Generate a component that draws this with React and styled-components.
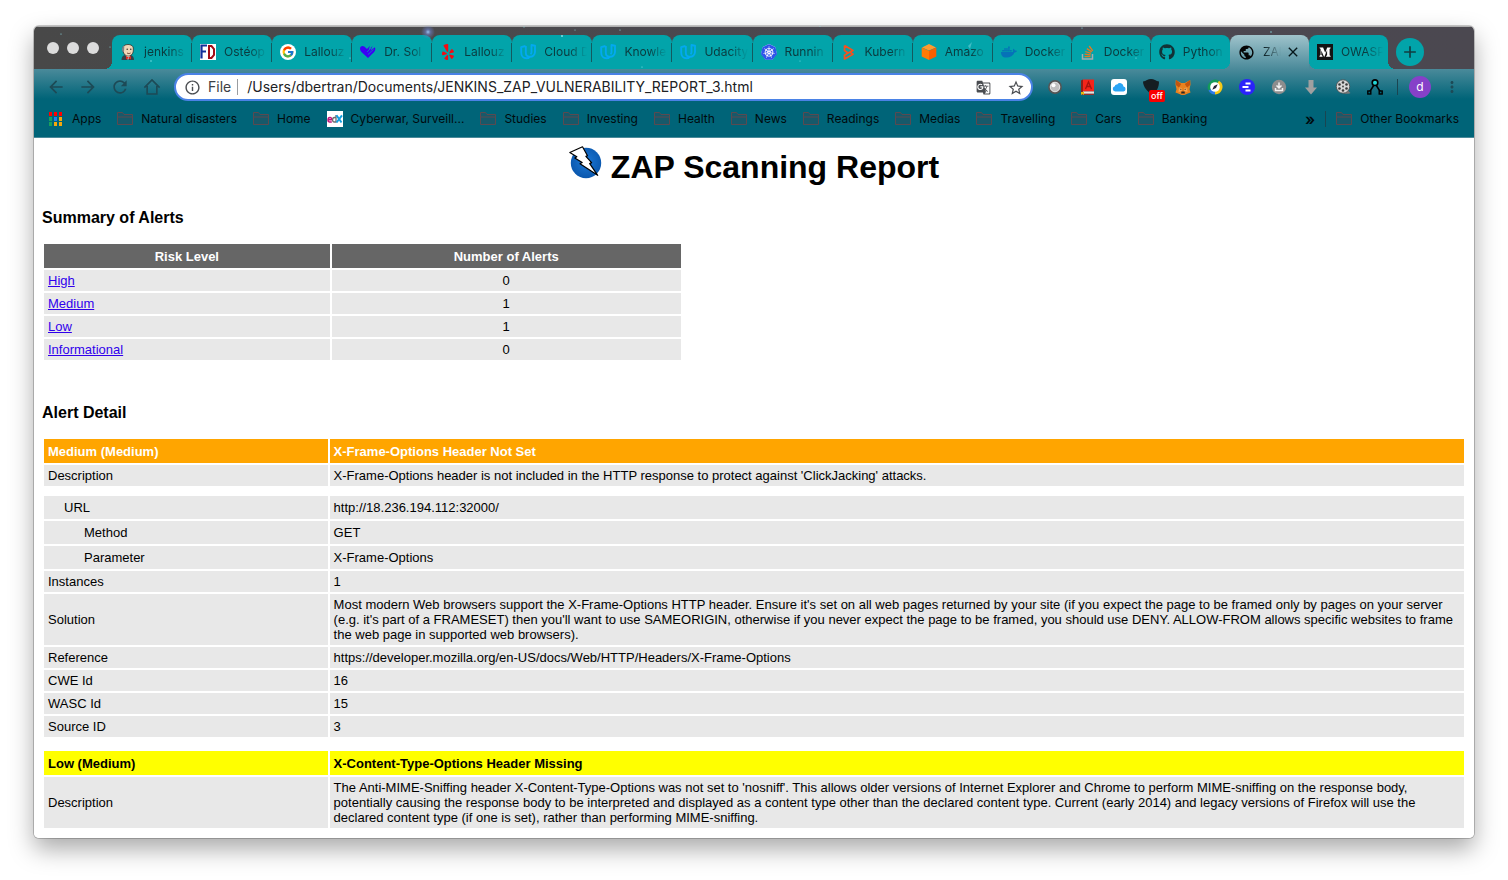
import React from "react";
import styled, { createGlobalStyle, css } from "styled-components";
import { FaYelp, FaDocker, FaGithub } from "react-icons/fa";
import { SiKubernetes } from "react-icons/si";
import { FcGoogle } from "react-icons/fc";
import {
  MdArrowBack,
  MdArrowForward,
  MdRefresh,
  MdInfoOutline,
  MdGTranslate,
  MdStarBorder,
  MdPublic,
  MdClose,
  MdAdd,
  MdMoreVert,
} from "react-icons/md";

const UI_FONT = 'Inter, Roboto, "Liberation Sans", sans-serif';
const PAGE_FONT = '"Liberation Sans", Arial, sans-serif';
const TEAL = "#02a4aa";
const STEEL = "#4a8a9a";
const DEEP = "#006478";

const GlobalStyle = createGlobalStyle`
  * { box-sizing: border-box; }
  body { margin: 0; background: #fff; }
  button { border: 0; padding: 0; background: none; color: inherit; font: inherit; cursor: pointer; }
`;

const Desktop = styled.div`
  padding: 26px 34px 42px;
  overflow: hidden;
`;

const Window = styled.div`
  position: relative;
  overflow: hidden;
  border-radius: 5px;
  background: #fff;
`;

const Shadow = styled.div`
  border-radius: 5px;
  box-shadow: 0 0 0 1px rgba(0, 0, 0, 0.2), 0 11px 24px rgba(0, 0, 0, 0.34);
`;

/* ---------- tab strip ---------- */

const TitleBar = styled.header`
  display: flex;
  align-items: flex-end;
  height: 43px;
  padding: 0 50px 0 13px;
  background: linear-gradient(#b0b0b0 1px, transparent 1px), linear-gradient(90deg, #484848 0%, #4a494c 30%, #4b4751 60%, #4b4850 100%);
`;

const Lights = styled.div`
  display: flex;
  align-self: flex-start;
  align-items: center;
  gap: 8px;
  width: 65px;
  height: 44px;
`;

const Light = styled.button`
  width: 12px;
  height: 12px;
  border-radius: 50%;
  background: #dcdcdc;
`;

const TabStrip = styled.nav`
  display: flex;
  flex: 1;
  min-width: 0;
  height: 34px;
`;

const flare = (side, color) => css`
  content: "";
  position: absolute;
  z-index: 1;
  bottom: 0;
  ${side}: -8px;
  width: 8px;
  height: 8px;
  background: radial-gradient(circle at ${side === "left" ? "0 0" : "8px 0"}, transparent 8px, ${color} 8px);
`;

const Tab = styled.div`
  position: relative;
  display: flex;
  flex: 1 1 79px;
  align-items: center;
  gap: 4px;
  min-width: 0;
  padding: 0 5px 0 8px;
  border-radius: 8px 8px 0 0;
  background: ${(p) => (p.$active ? `linear-gradient(#9fc3cb, ${STEEL})` : TEAL)};
  color: ${(p) => (p.$active ? "#06181c" : "#0b3a3e")};

  &:nth-child(-n + 11) { flex-basis: 80px; }

  ${(p) => (p.$active || p.$first) && css`
    &::before { ${flare("left", p.$active ? STEEL : TEAL)} }
  `}
  ${(p) => (p.$active || p.$last) && css`
    &::after { ${flare("right", p.$active ? STEEL : TEAL)} }
  `}
  ${(p) => p.$divider && css`
    &::after {
      content: "";
      position: absolute;
      right: 0;
      top: 8px;
      width: 1px;
      height: 19px;
      background: #145a5e;
    }
  `}
`;

const TabButton = styled.button`
  display: flex;
  flex: 1;
  align-items: center;
  gap: 8px;
  min-width: 0;
  height: 100%;
  text-align: left;
  svg { flex: none; }
`;

const TabTitle = styled.span`
  flex: 1;
  min-width: 0;
  font: 400 12px/16px ${UI_FONT};
  white-space: nowrap;
  mask-image: linear-gradient(90deg, #000 calc(100% - 18px), transparent);
`;

const CloseTab = styled.button`
  display: grid;
  place-items: center;
  width: 16px;
  height: 16px;
  margin-right: 3px;
`;

const NewTab = styled.button`
  display: grid;
  place-items: center;
  width: 28px;
  height: 28px;
  margin: 0 0 3px 8px;
  border-radius: 50%;
  background: ${TEAL};
  color: #123c40;
`;

const Stars = styled.svg`
  position: absolute;
  z-index: 2;
  inset: 0 auto auto 0;
  pointer-events: none;
`;

/* ---------- toolbar ---------- */

const Toolbar = styled.div`
  display: flex;
  align-items: center;
  height: 36px;
  padding: 0 6px;
  background: linear-gradient(${STEEL}, ${DEEP} 30px);
`;

const ToolButton = styled.button`
  position: relative;
  display: grid;
  flex: none;
  place-items: center;
  width: 32px;
  height: 32px;
  color: #1d4a56;
`;

const Omnibox = styled.form`
  display: flex;
  flex: 1;
  align-items: center;
  min-width: 0;
  height: 28px;
  margin: 0 6px;
  padding: 0 8px;
  border: 2px solid #4a82e6;
  border-radius: 14px;
  background: #fff;
  color: #4a4d51;
`;

const Scheme = styled.label`
  padding: 0 6px 0 7px;
  border-right: 1px solid #9a9da1;
  color: #3c4043;
  font: 400 14px/16px ${UI_FONT};
`;

const Address = styled.input`
  flex: 1;
  min-width: 0;
  padding: 0 0 0 9px;
  border: 0;
  outline: 0;
  background: none;
  color: #202124;
  font: 400 14px/20px ${UI_FONT};
`;

const OmniButton = styled.button`
  display: grid;
  place-items: center;
  width: 16px;
  height: 16px;
  margin-left: 16px;
`;

const OffBadge = styled.span`
  position: absolute;
  right: 2px;
  bottom: 1px;
  padding: 0 2px;
  border-radius: 2px;
  background: #f90000;
  color: #fff;
  font: 500 9px/12px ${UI_FONT};
`;

const Rule = styled.span`
  flex: none;
  width: 1px;
  height: 16px;
  background: #1a4551;
`;

const Account = styled.div`
  display: flex;
  align-items: center;
  gap: 11px;
  padding: 0 5px 0 6px;
`;

const Avatar = styled.button`
  flex: none;
  width: 22px;
  height: 22px;
  border-radius: 50%;
  background: #8640c8;
  color: #fff;
  font: 400 12px/22px ${UI_FONT};
`;

/* ---------- bookmarks ---------- */

const BookmarkBar = styled.nav`
  display: flex;
  align-items: center;
  gap: 16px;
  height: 33px;
  padding: 0 15px 5px 14px;
  border-bottom: 1px solid ${STEEL};
  background: ${DEEP};
`;

const Bookmark = styled.button`
  display: flex;
  align-items: center;
  gap: 8px;
  color: #000b0e;
  font: 400 12px/16px ${UI_FONT};
  white-space: nowrap;
`;

const MoreBookmarks = styled(Bookmark)`
  font-size: 16px;
  font-weight: 600;
`;

const Spacer = styled.span`
  flex: 1;
`;

const BarEnd = styled.div`
  display: flex;
  align-items: center;
  gap: 10px;
`;

/* ---------- report ---------- */

const Report = styled.main`
  padding: 8px;
  color: #000;
  font: 400 13px/15px ${PAGE_FONT};
`;

const ReportTitle = styled.h1`
  display: flex;
  justify-content: center;
  gap: 8px;
  margin: 0;
  font: 700 32px/42px ${PAGE_FONT};
`;

const SectionTitle = styled.h3`
  margin: ${(p) => p.$space}px 0 15px;
  font: 700 16px/18px ${PAGE_FONT};
`;

const Table = styled.table`
  width: ${(p) => p.$width};
  border-spacing: 2px;
  table-layout: fixed;
  & + & { margin-top: 10px; }
`;

const Col = styled.col`
  width: ${(p) => p.$width};
`;

const HeadCell = styled.th`
  height: 24px;
  padding: 0 4px;
  background: ${(p) => p.$fill};
  color: ${(p) => p.$ink};
  text-align: ${(p) => p.$align};
`;

const indents = [4, 20, 40];

const Cell = styled.td`
  height: ${(p) => (p.$tall ? 23 : 21)}px;
  padding: 3px 4px 3px ${(p) => indents[p.$level || 0]}px;
  background: #e8e8e8;
  text-align: ${(p) => p.$align || "left"};
`;

const GapCell = styled.td`
  height: 6px;
  padding: 0;
`;

const RiskLink = styled.a`
  color: #3000ec;
`;

/* ---------- drawings ---------- */

const Svg = ({ s = 16, children }) => (
  <svg width={s} height={s} viewBox="0 0 16 16" fill="none" aria-hidden="true">{children}</svg>
);

const Jenkins = () => (
  <Svg>
    <path d="M1.500 16c0-3 1.500-4.500 3.500-5h5.500c2 .5 3.500 2 3.500 5z" fill="#33414a" />
    <path d="M5.500 11l2.500 5 2.500-5z" fill="#fff" />
    <path d="M2.700 5C2.500 2 5 .5 8 .5s5.600 1.500 5.300 4.600c.3 3-.9 6.600-4.800 7C5 12.300 2.900 9 2.700 5z" fill="#f0d6b7" stroke="#2a1d18" strokeWidth=".7" />
    <path d="M2.700 8C1.500 5.500 1.800 2.500 4.500 1.200 4 3 4.500 5.500 3.800 8z" fill="#7c8488" />
    <circle cx="7.200" cy="5.300" r=".7" fill="#222" /><circle cx="10.800" cy="5.300" r=".7" fill="#222" />
    <path d="M7 9c1.200.7 2.600.7 3.600 0" stroke="#5a2a20" strokeWidth=".8" />
    <path d="M6 12l2.500 1.400L11 12v3.400l-2.500-1.200L6 15.400z" fill="#e0281f" />
  </Svg>
);
const Osteo = () => (
  <Svg>
    <path d="M0 0h16v16H0z" fill="#fff" />
    <path d="M1.500 14.500V1.500H7M1.500 7.500H6" stroke="#12309a" strokeWidth="2.200" />
    <path d="M9 2v12h2.500L14 11V5l-2.500-3z" stroke="#a30d16" strokeWidth="2" />
  </Svg>
);
const GoogleIcon = () => (
  <svg width="16" height="16" viewBox="0 0 16 16" aria-hidden="true">
    <circle cx="8" cy="8" r="8" fill="#fff" />
    <g transform="translate(1.500 1.500)"><FcGoogle size={13} /></g>
  </svg>
);
const Heart = () => (
  <Svg>
    <path d="M0 4.500C0 2 2.500 1.200 4.300 2.500L7 5l3-3.200L8.600 6 12.600 2l-2 4.600L14.800 3.200C16.500 6 14 8.500 11.500 10.500L8 14 2.500 9C1 7.600 0 6.300 0 4.500z" fill="#3c00f5" />
    <path d="M7 8l4-4M8 10.500l5.500-5" stroke={TEAL} strokeWidth=".7" />
  </Svg>
);
const Udacity = () => (
  <Svg>
    <path
      d="M5.500 2L1.200 3.200v5.300c0 3.300 2 5.800 5.300 5.800 1.300 0 2.500-.6 3.200-1.500M9.500 12.800C7 12.600 5.800 10.800 5.800 8.500V2M9.500 12.800c3.300.2 5.500-2 5.500-5V1.700L11.500 1v7c0 1-.3 1.700-1 2.200"
      stroke="#03a9f0"
      strokeWidth="1.900"
      strokeLinejoin="round"
    />
  </Svg>
);
const Kube = () => (
  <svg width="16" height="16" viewBox="0 0 16 16" aria-hidden="true">
    <path d="M8 0l6.200 3L15.800 9.600 11.500 15.500h-7L.2 9.600 1.800 3z" fill="#fff" />
    <SiKubernetes size={16} color="#2f55ea" />
  </svg>
);
const Katacoda = () => (
  <Svg>
    <path d="M3.500 1.500L12 6.500 7 9M3.500 1.500v5L7 9l-3.500 2.300V15L12 10.200 9 8" stroke="#f4511e" strokeWidth="1.700" strokeLinejoin="round" />
  </Svg>
);
const Cube = () => (
  <Svg>
    <path d="M8 0l7 3.400L8 6.500 1 3.400z" fill="#ff9b2e" />
    <path d="M.7 3.600L8 6.800V16L.7 12.600z" fill="#ff7a05" />
    <path d="M15.300 3.600L8 6.800V16l7.300-3.400z" fill="#fb5f00" />
  </Svg>
);
const StackIcon = () => (
  <Svg>
    <path d="M2.500 10v5h10v-5" stroke="#a7abae" strokeWidth="1.500" />
    <path d="M4.500 12.700h6M4.600 10.200l6 .8M5.300 7.500l5.700 1.900M6.800 4.600l5 3.300M9.200 2l3.600 4.800" stroke="#e8781e" strokeWidth="1.300" />
  </Svg>
);
const Medium = () => (
  <Svg>
    <path d="M0 0h16v16H0z" fill="#131313" />
    <path d="M2.500 3.500h3.600L8.200 8.800l2-5.300h3.400v.7l-1 .8v6.200l1 .8v.7H9.100V12l1-.8V6L7.400 12.700H7L4.300 6.500v4.300l1.200 1.300v.6h-3V12l1.100-1.300V5L2.500 4.100z" fill="#fff" />
  </Svg>
);
const AppsGrid = () => (
  <Svg>
    {["#f00", "#f00", "#f00", "#19a05c", "#1f7ff0", "#f5a80c", "#19a05c", "#f5a80c", "#f5a80c"].map((c, i) => (
      <rect key={i} x={1 + (i % 3) * 5} y={1 + Math.floor(i / 3) * 5} width="3" height="4" fill={c} />
    ))}
  </Svg>
);
const HomeIcon = () => (
  <Svg s={18}>
    <path d="M1.200 8.600L8 1.800l6.800 6.800M3.700 7v7.200h8.600V7" stroke="currentColor" strokeWidth="1.500" />
  </Svg>
);
const Folder = () => (
  <Svg>
    <path d="M.5 13.500v-12h5l1.500 2h8.500v10z" fill="#17596a" stroke="#5a4a50" />
    <path d="M.5 6h15" stroke="#5a4a50" />
  </Svg>
);
const EdX = () => (
  <Svg>
    <path d="M0 0h16v16H0z" fill="#fff" />
    <path d="M4.800 11H2.500A1.700 1.700 0 0 1 1 9.200C1 7.600 1.800 6.500 3 6.500s1.800.9 1.600 2.200H1" stroke="#c0147a" strokeWidth="1.500" />
    <path d="M9 4v7H7.300C6 11 5.600 10 5.600 8.800S6.300 6.500 7.500 6.500H9" stroke="#6d6d6d" strokeWidth="1.300" />
    <path d="M9.500 4.300l5 7.200M15 4.300l-5.500 7.200" stroke="#12a0e0" strokeWidth="2" />
  </Svg>
);

const BallExt = () => (
  <Svg>
    <circle cx="8" cy="8" r="6" fill="#bfbfbf" stroke="#555" strokeWidth="1.800" />
    <circle cx="8" cy="8" r="4.800" stroke="#eee" strokeWidth=".8" />
    <circle cx="6.500" cy="6.300" r="2" fill="#fff" />
  </Svg>
);
const BookExt = () => (
  <Svg>
    <path d="M2 1.500L4 .5v12L2 14.500z" fill="#8d2019" />
    <path d="M4 .5h11v12H4z" fill="#f3241a" />
    <path d="M4 12.500h11v2.300H3z" fill="#e9e4df" />
    <path d="M3 15.300h12" stroke="#b7201a" />
    <path d="M6.500 10L9.500 3l3 7M7.700 7.500h3.600" stroke="#a5130d" strokeWidth="1.300" />
    <path d="M2 13h3v3l-1.500-1L2 16z" fill="#e8b80c" />
  </Svg>
);
const CloudExt = () => (
  <Svg>
    <rect width="16" height="16" rx="3" fill="#fff" />
    <path d="M4.200 12.500a2.700 2.700 0 0 1-.4-5.300 2 2 0 0 1 2.400-1.700 3.500 3.500 0 0 1 6.300 1.900 2.600 2.600 0 0 1 0 5.100z" fill="#2aa5f5" />
  </Svg>
);
const ShieldExt = () => (
  <Svg>
    <path d="M0 2.500C3 2 5 0 8 0s5 2 8 2.500C16 8 14 13 9 15 5 13.500 0 8 0 2.500z" fill="#151e22" />
  </Svg>
);
const FoxExt = () => (
  <Svg>
    <path d="M.8 1l5.400 3h3.600l5.400-3 .3 4.500-1 4.700 1 3.300-3.300 1.200L9.500 16h-3l-2.700-1.300L.5 13.500l1-3.300-1-4.700z" fill="#e9821f" />
    <path d="M1 1l5.200 4L4 8.500.8 6zM15 1L9.800 5 12 8.500 15.200 6z" fill="#c2550f" />
    <path d="M4 8.500l2.500.5.500 3-3.500 1zM12 8.500L9.500 9 9 12l3.500 1z" fill="#f7a653" />
    <path d="M4.500 9.500l2 .8-.5.700zM11.500 9.500l-2 .8.500.7z" fill="#222" />
    <path d="M6.500 12.500h3l.4 2h-3.800z" fill="#2b2623" />
  </Svg>
);
const CompassExt = () => (
  <Svg>
    <path d="M1.500 11.500A7.500 7.500 0 0 1 12 1.700L8 8z" fill="#139b58" />
    <path d="M12 1.700A7.500 7.500 0 0 1 8 15.500V8z" fill="#f6c917" />
    <path d="M8 15.500a7.500 7.500 0 0 1-6.500-4L8 8z" fill="#2c7be8" />
    <circle cx="8" cy="8" r="4.800" fill="#fff" />
    <path d="M10.700 5.200L9 9 5.300 10.800 7 7z" fill="#223" />
  </Svg>
);
const BlueExt = () => (
  <Svg>
    <circle cx="8" cy="8" r="8" fill="#2a22fb" />
    <path d="M6.500 4.500h5M3.500 8h6M6.500 11.500h5" stroke="#fff" strokeWidth="2" />
  </Svg>
);
const SaveExt = () => (
  <Svg>
    <circle cx="8" cy="8" r="7.200" fill="#8d8d8d" />
    <path d="M8 3.500v5M5.500 6.500L8 9l2.500-2.500M4.500 9v2.500h7V9" stroke="#f2f2f2" strokeWidth="1.500" />
  </Svg>
);
const ArrowExt = () => (
  <Svg>
    <path d="M5.500 1h5v7.500H14L8 15.500 2 8.500h3.500z" fill="#a0a0a0" />
  </Svg>
);
const ReelExt = () => (
  <Svg>
    <path d="M8 14.500c3 0 4 1 7.500-.5l-3-3z" fill="#777" />
    <circle cx="8" cy="7.500" r="6.700" fill="#d8d8d8" stroke="#4b4b4b" strokeWidth=".8" />
    {[[8, 3.500], [4.500, 5.500], [4.500, 9.500], [8, 11.500], [11.500, 9.500], [11.500, 5.500]].map(([x, y]) => (
      <circle key={`${x}-${y}`} cx={x} cy={y} r="1.300" fill="#3a3a3a" />
    ))}
    <circle cx="8" cy="7.500" r=".9" fill="#3a3a3a" />
  </Svg>
);
const NodeExt = () => (
  <Svg>
    <path d="M7 6L2.500 13M9 6l4.500 7" stroke="#000" strokeWidth="1.500" />
    <circle cx="8" cy="3.700" r="2.800" fill="#23d6d6" stroke="#000" strokeWidth="1.600" />
    <rect x=".8" y="12" width="3" height="3" fill={DEEP} stroke="#000" strokeWidth="1.400" />
    <rect x="12.200" y="12" width="3" height="3" fill={DEEP} stroke="#000" strokeWidth="1.400" />
  </Svg>
);

const ZapLogo = () => (
  <svg width="34" height="34" viewBox="0 0 34 34" aria-hidden="true">
    <defs>
      <radialGradient id="zap" cx=".5" cy=".45" r=".55">
        <stop offset="0" stopColor="#1b78d6" /><stop offset="1" stopColor="#0a57ad" />
      </radialGradient>
    </defs>
    <circle cx="17" cy="17" r="15.200" fill="url(#zap)" />
    <path d="M.8 6.500L13.500 .8l5 9-1.600.6 5.700 6.200-1.900 1 8 11.700L11 17.800l2.200-1.300L5.800 12l2-1.300z" fill="#fff" stroke="#000" strokeWidth="1.200" strokeLinejoin="round" />
  </svg>
);

const specks = [
  [27, 8, 0.6], [76, 21, 0.5], [490, 1, 0.5], [541, 4, 0.5], [586, 4, 0.6], [786, 0, 0.6],
  [1048, 2, 0.6], [1237, 6, 0.7], [1102, 32, 0.6], [608, 41, 0.6], [117, 35, 0.7], [528, 10, 0.9], [316, 32, 0.6], [766, 35, 0.5],
];

const StarField = () => (
  <Stars width="1320" height="44" aria-hidden="true">
    <defs>
      <radialGradient id="glow">
        <stop offset="0" stopColor="#9cc4f0" /><stop offset=".4" stopColor="#6a7cc0" stopOpacity=".6" /><stop offset="1" stopColor="#6a7cc0" stopOpacity="0" />
      </radialGradient>
    </defs>
    <circle cx="394" cy="6" r="7" fill="url(#glow)" />
    {specks.map(([x, y, r]) => <circle key={x} cx={x} cy={y} r={r} fill="#8ee6ee" />)}
    <path d="M934 20l4-4-2 7z" fill="#7fd3e0" opacity=".5" />
  </Stars>
);

/* ---------- data ---------- */

const tabs = [
  { title: "jenkins", icon: <Jenkins /> },
  { title: "Ostéop", icon: <Osteo /> },
  { title: "Lallouz", icon: <GoogleIcon /> },
  { title: "Dr. Sol", icon: <Heart /> },
  { title: "Lallouz", icon: <FaYelp size={16} color="#f50a12" /> },
  { title: "Cloud D", icon: <Udacity /> },
  { title: "Knowle", icon: <Udacity /> },
  { title: "Udacity", icon: <Udacity /> },
  { title: "Runnin", icon: <Kube /> },
  { title: "Kubern", icon: <Katacoda /> },
  { title: "Amazo", icon: <Cube /> },
  { title: "Docker", icon: <FaDocker size={16} color="#0672b8" /> },
  { title: "Docker", icon: <StackIcon /> },
  { title: "Python", icon: <FaGithub size={16} color="#123236" /> },
  { title: "ZAP", icon: <MdPublic size={17} color="#050505" />, active: true },
  { title: "OWASP", icon: <Medium /> },
];

const navButtons = [
  { label: "Back", icon: <MdArrowBack size={20} /> },
  { label: "Forward", icon: <MdArrowForward size={20} /> },
  { label: "Reload", icon: <MdRefresh size={20} /> },
  { label: "Home", icon: <HomeIcon /> },
];

const extensions = [
  { label: "Sphere", icon: <BallExt /> },
  { label: "Dictionary", icon: <BookExt /> },
  { label: "Cloud", icon: <CloudExt /> },
  { label: "Shield", icon: <ShieldExt />, badge: "off" },
  { label: "Fox wallet", icon: <FoxExt /> },
  { label: "Compass", icon: <CompassExt /> },
  { label: "Outline", icon: <BlueExt /> },
  { label: "Save", icon: <SaveExt /> },
  { label: "Download", icon: <ArrowExt /> },
  { label: "Video", icon: <ReelExt /> },
  { label: "Nodes", icon: <NodeExt /> },
];

const bookmarks = [
  { name: "Apps", icon: <AppsGrid /> },
  { name: "Natural disasters" },
  { name: "Home" },
  { name: "Cyberwar, Surveill...", icon: <EdX /> },
  { name: "Studies" },
  { name: "Investing" },
  { name: "Health" },
  { name: "News" },
  { name: "Readings" },
  { name: "Medias" },
  { name: "Travelling" },
  { name: "Cars" },
  { name: "Banking" },
];

const summary = [["High", 0], ["Medium", 1], ["Low", 1], ["Informational", 0]];

const alerts = [
  {
    id: "medium",
    risk: "Medium (Medium)",
    name: "X-Frame-Options Header Not Set",
    fill: "#ffa500",
    ink: "#fff",
    rows: [
      { label: "Description", value: "X-Frame-Options header is not included in the HTTP response to protect against 'ClickJacking' attacks." },
      { gap: true },
      { label: "URL", value: "http://18.236.194.112:32000/", level: 1 },
      { label: "Method", value: "GET", level: 2 },
      { label: "Parameter", value: "X-Frame-Options", level: 2 },
      { label: "Instances", value: "1" },
      {
        label: "Solution",
        value:
          "Most modern Web browsers support the X-Frame-Options HTTP header. Ensure it's set on all web pages returned by your site (if you expect the page to be framed only by pages on your server (e.g. it's part of a FRAMESET) then you'll want to use SAMEORIGIN, otherwise if you never expect the page to be framed, you should use DENY. ALLOW-FROM allows specific websites to frame the web page in supported web browsers).",
      },
      { label: "Reference", value: "https://developer.mozilla.org/en-US/docs/Web/HTTP/Headers/X-Frame-Options" },
      { label: "CWE Id", value: "16" },
      { label: "WASC Id", value: "15" },
      { label: "Source ID", value: "3" },
    ],
  },
  {
    id: "low",
    risk: "Low (Medium)",
    name: "X-Content-Type-Options Header Missing",
    fill: "#ffff00",
    ink: "#000",
    rows: [
      {
        label: "Description",
        value:
          "The Anti-MIME-Sniffing header X-Content-Type-Options was not set to 'nosniff'. This allows older versions of Internet Explorer and Chrome to perform MIME-sniffing on the response body, potentially causing the response body to be interpreted and displayed as a content type other than the declared content type. Current (early 2014) and legacy versions of Firefox will use the declared content type (if one is set), rather than performing MIME-sniffing.",
      },
    ],
  },
];

/* ---------- components ---------- */

const BrowserTabs = () => (
  <TitleBar>
    <Lights>
      {["Close", "Minimize", "Zoom"].map((l) => <Light key={l} aria-label={l} />)}
    </Lights>
    <TabStrip aria-label="Tabs">
      {tabs.map((t, i) => (
        <Tab
          key={i}
          $active={t.active}
          $first={i === 0}
          $last={i === tabs.length - 1}
          $divider={!t.active && i < tabs.length - 1 && !tabs[i + 1].active}
        >
          <TabButton>
            {t.icon}
            <TabTitle>{t.title}</TabTitle>
          </TabButton>
          {t.active && <CloseTab aria-label="Close tab"><MdClose size={16} /></CloseTab>}
        </Tab>
      ))}
    </TabStrip>
    <NewTab aria-label="New tab"><MdAdd size={20} /></NewTab>
    <StarField />
  </TitleBar>
);

const AddressBar = () => (
  <Toolbar>
    {navButtons.map((b) => <ToolButton key={b.label} aria-label={b.label}>{b.icon}</ToolButton>)}
    <Omnibox>
      <MdInfoOutline size={17} />
      <Scheme htmlFor="address">File</Scheme>
      <Address id="address" readOnly value="/Users/dbertran/Documents/JENKINS_ZAP_VULNERABILITY_REPORT_3.html" />
      <OmniButton type="button" aria-label="Translate"><MdGTranslate size={15} /></OmniButton>
      <OmniButton type="button" aria-label="Bookmark this page"><MdStarBorder size={18} /></OmniButton>
    </Omnibox>
    {extensions.map((e) => (
      <ToolButton key={e.label} aria-label={e.label}>
        {e.icon}
        {e.badge && <OffBadge>{e.badge}</OffBadge>}
      </ToolButton>
    ))}
    <Account>
      <Rule />
      <Avatar>d</Avatar>
    </Account>
    <ToolButton aria-label="Menu"><MdMoreVert size={18} /></ToolButton>
  </Toolbar>
);

const Bookmarks = () => (
  <BookmarkBar aria-label="Bookmarks">
    {bookmarks.map((b) => (
      <Bookmark key={b.name}>{b.icon || <Folder />}{b.name}</Bookmark>
    ))}
    <Spacer />
    <BarEnd>
      <MoreBookmarks aria-label="More bookmarks">»</MoreBookmarks>
      <Rule />
      <Bookmark><Folder />Other Bookmarks</Bookmark>
    </BarEnd>
  </BookmarkBar>
);

const SummaryTable = () => (
  <Table $width="45%">
    <colgroup><Col $width="45%" /><Col $width="55%" /></colgroup>
    <thead>
      <tr>
        <HeadCell $fill="#666" $ink="#fff" $align="center">Risk Level</HeadCell>
        <HeadCell $fill="#666" $ink="#fff" $align="center">Number of Alerts</HeadCell>
      </tr>
    </thead>
    <tbody>
      {summary.map(([level, count]) => (
        <tr key={level}>
          <Cell><RiskLink href={`#${level.toLowerCase()}`}>{level}</RiskLink></Cell>
          <Cell $align="center">{count}</Cell>
        </tr>
      ))}
    </tbody>
  </Table>
);

const AlertTable = ({ alert }) => (
  <Table $width="100%" id={alert.id}>
    <colgroup><Col $width="20%" /><Col /></colgroup>
    <thead>
      <tr>
        <HeadCell $fill={alert.fill} $ink={alert.ink} $align="left">{alert.risk}</HeadCell>
        <HeadCell $fill={alert.fill} $ink={alert.ink} $align="left">{alert.name}</HeadCell>
      </tr>
    </thead>
    <tbody>
      {alert.rows.map((r, i) =>
        r.gap ? (
          <tr key={i}><GapCell colSpan={2} /></tr>
        ) : (
          <tr key={i}>
            <Cell $level={r.level} $tall={!!r.level}>{r.label}</Cell>
            <Cell>{r.value}</Cell>
          </tr>
        )
      )}
    </tbody>
  </Table>
);

export default function App() {
  return (
    <>
      <GlobalStyle />
      <Desktop>
        <Shadow>
          <Window>
            <BrowserTabs />
            <AddressBar />
            <Bookmarks />
            <Report>
              <ReportTitle><ZapLogo />ZAP Scanning Report</ReportTitle>
              <SectionTitle $space={21}>Summary of Alerts</SectionTitle>
              <SummaryTable />
              <SectionTitle $space={42}>Alert Detail</SectionTitle>
              {alerts.map((a) => <AlertTable key={a.id} alert={a} />)}
            </Report>
          </Window>
        </Shadow>
      </Desktop>
    </>
  );
}
